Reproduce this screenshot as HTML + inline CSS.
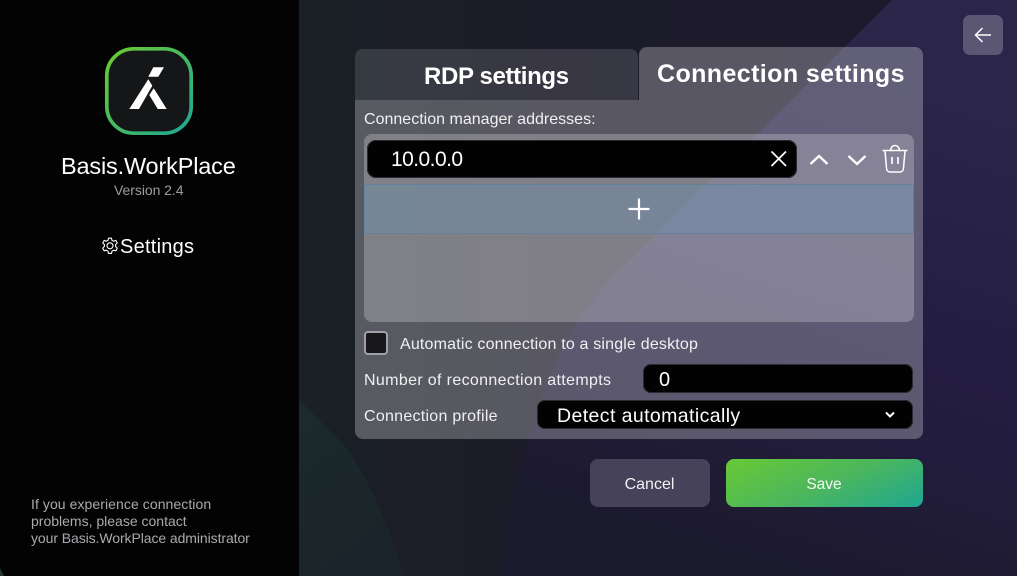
<!DOCTYPE html>
<html><head><meta charset="utf-8">
<style>
html,body{margin:0;padding:0;width:1017px;height:576px;overflow:hidden;background:#1c1b2b}
body{position:relative;font-family:"Liberation Sans",sans-serif;color:#fff}
.a{position:absolute;white-space:nowrap}
.t{position:absolute;white-space:nowrap;line-height:20px}
</style></head><body>
<svg class="a" style="left:0;top:0" width="1017" height="576" viewBox="0 0 1017 576">
<defs>
<linearGradient id="bg" x1="300" y1="0" x2="1017" y2="0" gradientUnits="userSpaceOnUse"><stop offset="0" stop-color="#1a2026"/><stop offset=".35" stop-color="#1c1b29"/><stop offset="1" stop-color="#1e1a30"/></linearGradient>
<linearGradient id="pu" x1="950" y1="100" x2="800" y2="576" gradientUnits="userSpaceOnUse"><stop offset="0" stop-color="#2a2549"/><stop offset=".5" stop-color="#241d42"/><stop offset=".75" stop-color="#211c3a"/><stop offset="1" stop-color="#1c1a2d"/></linearGradient>
<linearGradient id="te" x1="300" y1="420" x2="420" y2="576" gradientUnits="userSpaceOnUse"><stop offset="0" stop-color="#1b2a2c"/><stop offset="1" stop-color="#1b2229"/></linearGradient>
<linearGradient id="ring" x1="0" y1="0" x2="1" y2="1"><stop offset="0" stop-color="#6ccb2f"/><stop offset="1" stop-color="#1fa795"/></linearGradient>
</defs>
<rect width="1017" height="576" fill="url(#bg)"/>
<path d="M892 0L1017 0L1017 576L500 576C520 420 560 335 610 280Z" fill="url(#pu)"/>
<path d="M299 400L345 446C370 480 390 530 405 576L299 576Z" fill="url(#te)"/>
</svg>
<div class="a" style="left:0;top:0;width:299px;height:576px;background:#030304"></div>
<svg class="a" style="left:0;top:566px" width="10" height="10" viewBox="0 0 10 10"><path d="M0 2L0 10L4 10Z" fill="#1f3433"/></svg>

<svg class="a" style="left:104px;top:46px" width="90" height="90" viewBox="0 0 90 90">
<rect x="2.800" y="2.800" width="84.400" height="84.400" rx="27" fill="#141617" stroke="url(#ring)" stroke-width="3.700"/>
<path d="M49.300 21.300H60L54.300 30.700H44.300Z M44.300 33.300L48.300 39.700L35 63H25.300Z M49.700 42.300L62.700 63H53.700L45.300 49Z" fill="#fff"/>
</svg>
<div class="t" style="left:61px;top:156px;font-size:23.500px;letter-spacing:-.17px;line-height:20px;color:#fff">Basis.WorkPlace</div>
<div class="t" style="left:114px;top:180px;font-size:14px;letter-spacing:-.05px;color:#9b9ca1">Version 2.4</div>
<svg class="a" style="left:101px;top:237px" width="18" height="18" viewBox="0 0 18 18" fill="none" stroke="#fff" stroke-width="1.100">
<path d="M7.500 1.200H10.500L11 3.400L12.700 4.200L14.800 3.400L16.300 6L14.600 7.400V9.400L16.300 11.200L14.800 13.800L12.700 13.200L11 14.200L10.500 16.400H7.500L7 14.200L5.300 13.200L3.200 13.800L1.700 11.200L3.400 9.400V7.400L1.700 6L3.200 3.400L5.300 4.200L7 3.400Z" stroke-linejoin="round"/>
<circle cx="9" cy="8.800" r="3"/>
</svg>
<div class="t" style="left:120px;top:237px;font-size:20px;letter-spacing:.25px;color:#fff">Settings</div>
<div class="t" style="left:31px;top:496px;font-size:14px;line-height:17px;letter-spacing:-.08px;color:#a9aaae"><span style="letter-spacing:.07px">If you experience connection</span><br><span style="letter-spacing:0">problems, please contact</span><br>your Basis.WorkPlace administrator</div>

<div class="a" style="left:963px;top:15px;width:40px;height:40px;border-radius:7px;background:#5a5673"></div>
<svg class="a" style="left:973px;top:25px" width="20" height="20" viewBox="0 0 20 20" fill="none" stroke="#fff" stroke-width="1.500"><path d="M2.500 10H18M9.500 3L2.500 10L9.500 17"/></svg>

<div class="a" style="left:355px;top:49px;width:283px;height:51px;border-radius:8px 8px 0 0;background:rgba(255,255,255,.125)"></div>
<div class="a" style="left:639px;top:47px;width:284px;height:53px;border-radius:8px 8px 0 0;background:rgba(255,255,255,.265)"></div>
<div class="a" style="left:355px;top:100px;width:568px;height:339px;border-radius:0 0 8px 8px;background:rgba(255,255,255,.265)"></div>
<div class="t" style="left:424px;top:67px;font-size:24px;font-weight:bold;letter-spacing:-.35px;color:#fff">RDP settings</div>
<div class="t" style="left:657px;top:64px;font-size:25px;font-weight:bold;letter-spacing:.4px;color:#fff">Connection settings</div>
<div class="t" style="left:364px;top:110px;font-size:16px;letter-spacing:.01px;color:#f0f0f2">Connection manager addresses:</div>

<div class="a" style="left:364px;top:134px;width:550px;height:188px;border-radius:8px;background:rgba(255,255,255,.24)"></div>
<div class="a" style="left:364px;top:184px;width:548px;height:48px;border:1px solid #64809a;background:rgba(98,150,190,.30)"></div>
<div class="a" style="left:367px;top:140px;width:430px;height:38px;border-radius:9px;background:#020203;box-shadow:inset 0 0 0 1px #2c2a33"></div>
<div class="t" style="left:391px;top:150px;font-size:21px;letter-spacing:-.55px;color:#fff">10.0.0.0</div>
<svg class="a" style="left:768px;top:148px" width="22" height="22" viewBox="0 0 22 22" fill="none" stroke="#fff" stroke-width="1.700"><path d="M3.500 3.500L18 18M18 3.500L3.500 18"/></svg>
<svg class="a" style="left:808px;top:150px" width="24" height="18" viewBox="0 0 24 18" fill="none" stroke="#fff" stroke-width="2.300"><path d="M2.500 14L11 6L19.500 14"/></svg>
<svg class="a" style="left:846px;top:150px" width="24" height="18" viewBox="0 0 24 18" fill="none" stroke="#fff" stroke-width="2.300"><path d="M2.500 6L11 14L19.500 6"/></svg>
<svg class="a" style="left:881px;top:144px" width="28" height="30" viewBox="0 0 28 30" fill="none" stroke="#fff" stroke-width="1.500"><path d="M1.500 6.500H26.500M9.500 6.500C10 3 11.500 1.500 14 1.500C16.500 1.500 18 3 18.500 6.500"/><path d="M4 7L5.500 24C5.600 26.500 7 28 9 28H19C21 28 22.400 26.500 22.500 24L24 7"/><path d="M11 13V20M17 13V20" stroke-width="1.700"/></svg>
<svg class="a" style="left:627px;top:197px" width="24" height="24" viewBox="0 0 24 24" fill="none" stroke="#fff" stroke-width="2.200"><path d="M12 1.500V22.500M1.500 12H22.500"/></svg>

<div class="a" style="left:364px;top:331px;width:20px;height:20px;border:2px solid #a0a0a6;border-radius:4px;background:#18181b"></div>
<div class="t" style="left:400px;top:335px;font-size:16px;letter-spacing:.18px;color:#f0f0f2">Automatic connection to a single desktop</div>
<div class="t" style="left:364px;top:371px;font-size:16px;letter-spacing:.35px;color:#f0f0f2">Number of reconnection attempts</div>
<div class="a" style="left:643px;top:364px;width:270px;height:29px;border-radius:8px;background:#020203;box-shadow:inset 0 0 0 1px #2c2a33"></div>
<div class="t" style="left:659px;top:370px;font-size:20px;color:#fff">0</div>
<div class="t" style="left:364px;top:407px;font-size:16px;letter-spacing:.27px;color:#f0f0f2">Connection profile</div>
<div class="a" style="left:537px;top:400px;width:376px;height:29px;border-radius:8px;background:#020203;box-shadow:inset 0 0 0 1px #2c2a33"></div>
<div class="t" style="left:557px;top:406px;font-size:19.500px;letter-spacing:.4px;color:#fff">Detect automatically</div>
<svg class="a" style="left:884px;top:410px" width="12" height="10" viewBox="0 0 12 10" fill="none" stroke="#fff" stroke-width="2"><path d="M2 2.500L6 6.500L10 2.500"/></svg>

<div class="a" style="left:590px;top:459px;width:120px;height:48px;border-radius:8px;background:#46425a"></div>
<div class="t" style="left:590px;top:475px;width:119px;text-align:center;font-size:16px;letter-spacing:0;color:#f2f2f4">Cancel</div>
<div class="a" style="left:726px;top:459px;width:197px;height:48px;border-radius:8px;background:linear-gradient(155deg,#68c936 0%,#4db75b 50%,#1fa792 100%)"></div>
<div class="t" style="left:726px;top:475px;width:196px;text-align:center;font-size:15.500px;letter-spacing:0;color:#f4f8f4">Save</div>
</body></html>
